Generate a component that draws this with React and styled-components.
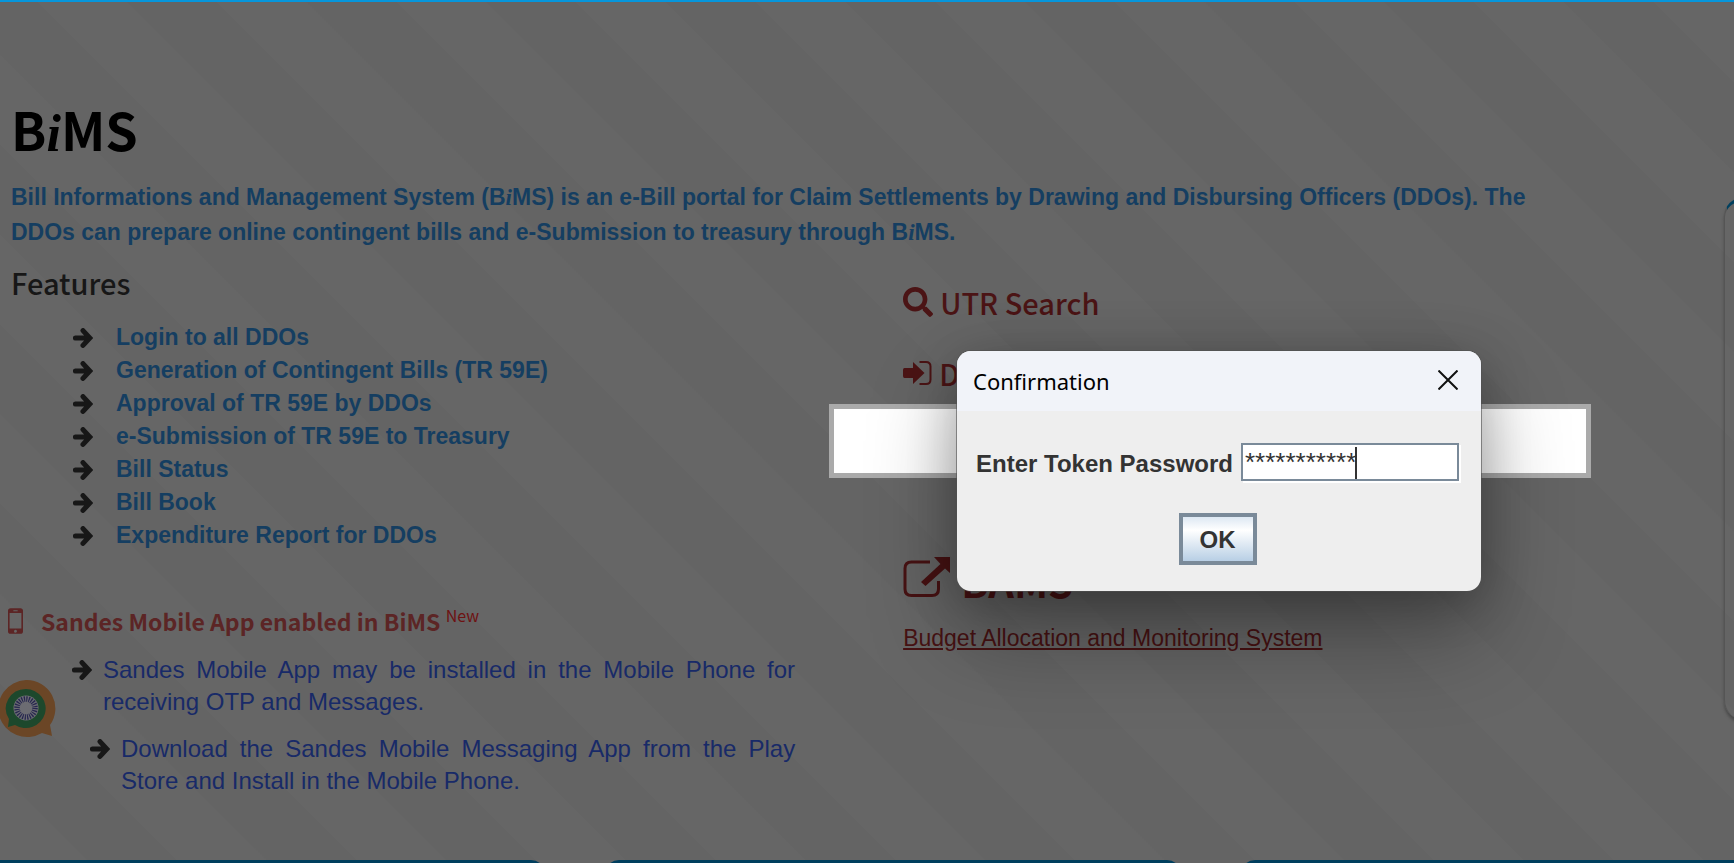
import React from "react";
import styled, { createGlobalStyle } from "styled-components";
import { FaSearch } from "react-icons/fa";

const features = [
  "Login to all DDOs",
  "Generation of Contingent Bills (TR 59E)",
  "Approval of TR 59E by DDOs",
  "e-Submission of TR 59E to Treasury",
  "Bill Status",
  "Bill Book",
  "Expenditure Report for DDOs",
];

const Arrow = () => (
  <ArrowSvg viewBox="0 0 20 20" aria-hidden="true">
    <path
      d="M2.400 10H15M10 2.600L16.800 10L10 17.400"
      fill="none"
      stroke="#171717"
      strokeWidth="5"
      strokeLinecap="round"
      strokeLinejoin="miter"
    />
  </ArrowSvg>
);

const PhoneIcon = () => (
  <svg width="15" height="26" viewBox="0 0 14 24" aria-hidden="true">
    <path
      fillRule="evenodd"
      fill="#5c2525"
      d="M2.5 0h9A2.5 2.5 0 0 1 14 2.500v19a2.500 2.500 0 0 1-2.500 2.500h-9A2.500 2.500 0 0 1 0 21.500v-19A2.500 2.500 0 0 1 2.500 0zM1.500 4.500v14.500h11V4.500zM5 2v1h4V2zM7 20.200a1.400 1.400 0 1 0 0 2.800a1.400 1.400 0 0 0 0-2.800z"
    />
  </svg>
);

const SignInIcon = () => (
  <svg width="29" height="24" viewBox="0 0 29 24" aria-hidden="true">
    <path d="M0 9Q0 7 1.500 7H10V1L21.500 12L10 23V17H1.500Q0 17 0 15Z" fill="#4b1415" />
    <path
      d="M16.500 1H23Q27.500 1 27.500 5.500V18.500Q27.500 23 23 23H16.500"
      fill="none"
      stroke="#4b1415"
      strokeWidth="2"
    />
  </svg>
);

const ExternalIcon = () => (
  <svg width="48" height="41" viewBox="0 0 48 41" aria-hidden="true">
    <path
      d="M27 5H8.500Q2 5 2 11.500V32Q2 38.500 8.500 38.500H29Q35.500 38.500 35.500 32V24"
      fill="none"
      stroke="#471213"
      strokeWidth="3"
    />
    <path d="M31 0H47V16L42 11.500L22.500 29L18 25L37.500 7Z" fill="#471213" />
  </svg>
);

const SandesLogo = () => (
  <svg width="56" height="58" viewBox="0 0 56 58" aria-hidden="true">
    <path
      fill="#6b4626"
      d="M26 0A29 28.500 0 0 1 50 45L52 56L42 53A29 28.500 0 1 1 26 0Z"
    />
    <path
      fill="#1d482c"
      d="M26 9A20 19.500 0 1 1 15 45L8 47L9 39A20 19.500 0 0 1 26 9Z"
    />
    <circle cx="26" cy="28" r="12.500" fill="#6c6c72" />
    <circle
      cx="26"
      cy="28"
      r="9"
      fill="none"
      stroke="#26264f"
      strokeWidth="5.500"
      strokeDasharray="1.200 1.156"
    />
  </svg>
);

const CloseIcon = () => (
  <svg width="20" height="20" viewBox="0 0 20 20" aria-hidden="true">
    <path d="M0.500 0.500L19.500 19.500M19.500 0.500L0.500 19.500" stroke="#111" strokeWidth="2" />
  </svg>
);

const App = () => {
  return (
    <Page>
      <GlobalStyle />
      <Main>
        <Content>
          <Title>
            B<Slant>i</Slant>MS
          </Title>
          <Intro>
            Bill Informations and Management System (B<Slant>i</Slant>MS) is an
            e-Bill portal for Claim Settlements by Drawing and Disbursing
            Officers (DDOs). The DDOs can prepare online contingent bills and
            e-Submission to treasury through B<Slant>i</Slant>MS.
          </Intro>
          <Columns>
            <Left>
              <FeaturesTitle>Features</FeaturesTitle>
              <FeatureList>
                {features.map((feature) => (
                  <Feature key={feature}>
                    <Arrow />
                    {feature}
                  </Feature>
                ))}
              </FeatureList>
              <SandesTitle>
                <PhoneIcon />
                <SandesName>
                  Sandes Mobile App enabled in BiMS <New>New</New>
                </SandesName>
              </SandesTitle>
              <Sandes>
                <LogoBox>
                  <SandesLogo />
                </LogoBox>
                <Steps>
                  <Step>
                    <Arrow />
                    <StepText>
                      Sandes Mobile App may be installed in the Mobile Phone
                      for receiving OTP and Messages.
                    </StepText>
                  </Step>
                  <Step $indent>
                    <Arrow />
                    <StepText>
                      Download the Sandes Mobile Messaging App from the Play
                      Store and Install in the Mobile Phone.
                    </StepText>
                  </Step>
                </Steps>
              </Sandes>
            </Left>
            <Right>
              <SideLink href="#utr">
                <FaSearch size={30} />
                UTR Search
              </SideLink>
              <SideLink href="#ddo">
                <SignInIcon />
                DDO Login
              </SideLink>
              <Highlight />
              <BamsLink href="#bams">
                <ExternalIcon />
                BAMS
              </BamsLink>
              <BudgetLink href="#budget">
                Budget Allocation and Monitoring System
              </BudgetLink>
            </Right>
          </Columns>
        </Content>
        <SideCard />
      </Main>
      <Cards>
        <BottomCard />
        <BottomCard />
        <BottomCard />
      </Cards>
      <Dialog role="dialog" aria-labelledby="dialog-title">
        <DialogBar>
          <DialogTitle id="dialog-title">Confirmation</DialogTitle>
          <Close type="button" aria-label="Close">
            <CloseIcon />
          </Close>
        </DialogBar>
        <DialogBody>
          <Field>
            <Label htmlFor="token">Enter Token Password</Label>
            <InputBox>
              <Input id="token" type="text" defaultValue="***********" />
              <Caret />
            </InputBox>
          </Field>
          <Ok type="button">OK</Ok>
        </DialogBody>
      </Dialog>
    </Page>
  );
};

export default App;

const sans = `"Noto Sans CJK SC", sans-serif`;
const arial = `"Liberation Sans", Arial, sans-serif`;

const GlobalStyle = createGlobalStyle`
  * {
    box-sizing: border-box;
  }
  body {
    margin: 0;
    background: #656565;
    font-family: ${arial};
    overflow: hidden;
  }
  h1, h2, h3, p, ul {
    margin: 0;
    padding: 0;
  }
`;
const Page = styled.div`
  position: relative;
  height: 100vh;
  overflow: hidden;
  display: flex;
  flex-direction: column;
  border-top: 2px solid #0696dc;
  background: repeating-linear-gradient(
    45deg,
    #666666 0,
    #666666 63px,
    #646464 64px,
    #646464 127px
  );
`;
const Main = styled.main`
  display: flex;
  flex: 1;
  min-height: 0;
  justify-content: space-between;
`;
const Content = styled.div`
  width: 92%;
  padding: 89px 0 0 11px;
`;
const Title = styled.h1`
  font: 700 52px/76px ${sans};
  color: #000;
`;
const Slant = styled.i`
  font-family: "Liberation Serif", serif;
`;
const Intro = styled.p`
  font: 700 23px/34px ${arial};
  color: #153e61;
  margin-top: 8px;
  max-width: 1550px;
`;
const Columns = styled.div`
  display: flex;
`;
const Left = styled.section`
  width: 50%;
  padding-right: 8px;
`;
const FeaturesTitle = styled.h2`
  font: 500 29px/40px ${sans};
  color: #171717;
  margin-top: 12px;
`;
const FeatureList = styled.ul`
  list-style: none;
  margin: 19px 0 0 62px;
`;
const Feature = styled.li`
  display: flex;
  align-items: center;
  gap: 23px;
  font: 700 23px/33px ${arial};
  color: #153e61;
`;
const ArrowSvg = styled.svg`
  width: 20px;
  height: 20px;
  flex: none;
`;
const SandesTitle = styled.h3`
  display: flex;
  align-items: center;
  gap: 18px;
  margin: 52px 0 0 -3px;
`;
const SandesName = styled.span`
  font: 700 23px/34px ${sans};
  color: #5c2525;
`;
const New = styled.sup`
  font: 400 16px/16px ${sans};
  color: #6e1212;
`;
const Sandes = styled.div`
  display: flex;
  margin-left: -11px;
`;
const LogoBox = styled.div`
  width: 72px;
  padding-top: 42px;
`;
const Steps = styled.ul`
  flex: 1;
  list-style: none;
  margin-top: 16px;
`;
const Step = styled.li`
  display: flex;
  gap: 11px;
  margin: 0 0 15px ${(props) => (props.$indent ? "18px" : "0")};
  & > svg {
    margin-top: 6px;
  }
`;
const StepText = styled.p`
  flex: 1;
  font: 400 24px/32px ${arial};
  text-align: justify;
  color: #182a68;
`;
const Right = styled.section`
  width: 50%;
  padding: 31px 0 0 100px;
`;
const SideLink = styled.a`
  display: flex;
  align-items: center;
  gap: 7px;
  margin-bottom: 29px;
  font: 500 29px/42px ${sans};
  color: #4b1415;
  text-decoration: none;
`;
const Highlight = styled.div`
  height: 74px;
  margin: -19px 4px 0 -74px;
  border: 5px solid #aaaaaa;
  background: #fff;
`;
const BamsLink = styled.a`
  display: flex;
  align-items: baseline;
  gap: 10px;
  margin-top: 73px;
  font: 700 40px/60px ${sans};
  color: #471213;
  text-decoration: none;
`;
const BudgetLink = styled.a`
  display: inline-block;
  margin-top: 10px;
  font: 400 23px/34px ${arial};
  color: #471213;
`;
const SideCard = styled.aside`
  flex: none;
  width: 200px;
  height: 523px;
  margin: 195px -190px 0 0;
  border-top: 4px solid #00405f;
  border-left: 1px solid #555;
  border-radius: 20px;
  box-shadow: 0 3px 3px #4a4a4a;
`;
const Cards = styled.div`
  display: flex;
  gap: 60px;
  height: 3px;
  margin: 0 -82px 0 -30px;
`;
const BottomCard = styled.div`
  flex: 1;
  height: 20px;
  background: #003f5e;
  border-radius: 14px 14px 0 0;
`;
const Dialog = styled.div`
  position: absolute;
  left: 957px;
  top: 349px;
  width: 524px;
  border-radius: 14px;
  background: #eeeeee;
  overflow: hidden;
  box-shadow: 0 0 0 1px rgba(80, 80, 80, 0.6), 0 44px 90px rgba(0, 0, 0, 0.32),
    0 8px 50px rgba(0, 0, 0, 0.22);
`;
const DialogBar = styled.header`
  display: flex;
  align-items: center;
  justify-content: space-between;
  height: 60px;
  padding: 0 23px 2px 16px;
  background: #f1f3f9;
`;
const DialogTitle = styled.h2`
  font: 400 22px/32px "Noto Sans", sans-serif;
  padding-top: 2px;
  color: #000;
`;
const Close = styled.button`
  display: flex;
  padding: 0;
  border: 0;
  background: none;
`;
const DialogBody = styled.div`
  display: flex;
  flex-direction: column;
  align-items: center;
  padding: 31px 22px 26px 19px;
`;
const Field = styled.div`
  display: flex;
  align-items: center;
  width: 100%;
  gap: 8px;
`;
const Label = styled.label`
  padding-top: 4px;
  font: 700 24px/36px ${arial};
  color: #333;
  white-space: nowrap;
`;
const InputBox = styled.div`
  position: relative;
  flex: 1;
`;
const Input = styled.input`
  display: block;
  width: 100%;
  height: 38px;
  padding: 0 2px;
  border: 2px solid #7a8a99;
  border-radius: 0;
  box-shadow: 2px 2px 0 #fff;
  background: #fff;
  font: 400 26px/34px ${arial};
  color: #333;
`;
const Caret = styled.span`
  position: absolute;
  left: 114px;
  top: 4px;
  width: 2px;
  height: 32px;
  background: #333;
`;
const Ok = styled.button`
  width: 78px;
  height: 52px;
  margin-top: 31px;
  padding: 2px 0 0;
  border: 4px solid #7a8a99;
  border-radius: 0;
  background: linear-gradient(#dde8f3 0, #fff 30%, #b8cfe5 100%);
  font: 700 24px/40px ${arial};
  color: #333;
`;
